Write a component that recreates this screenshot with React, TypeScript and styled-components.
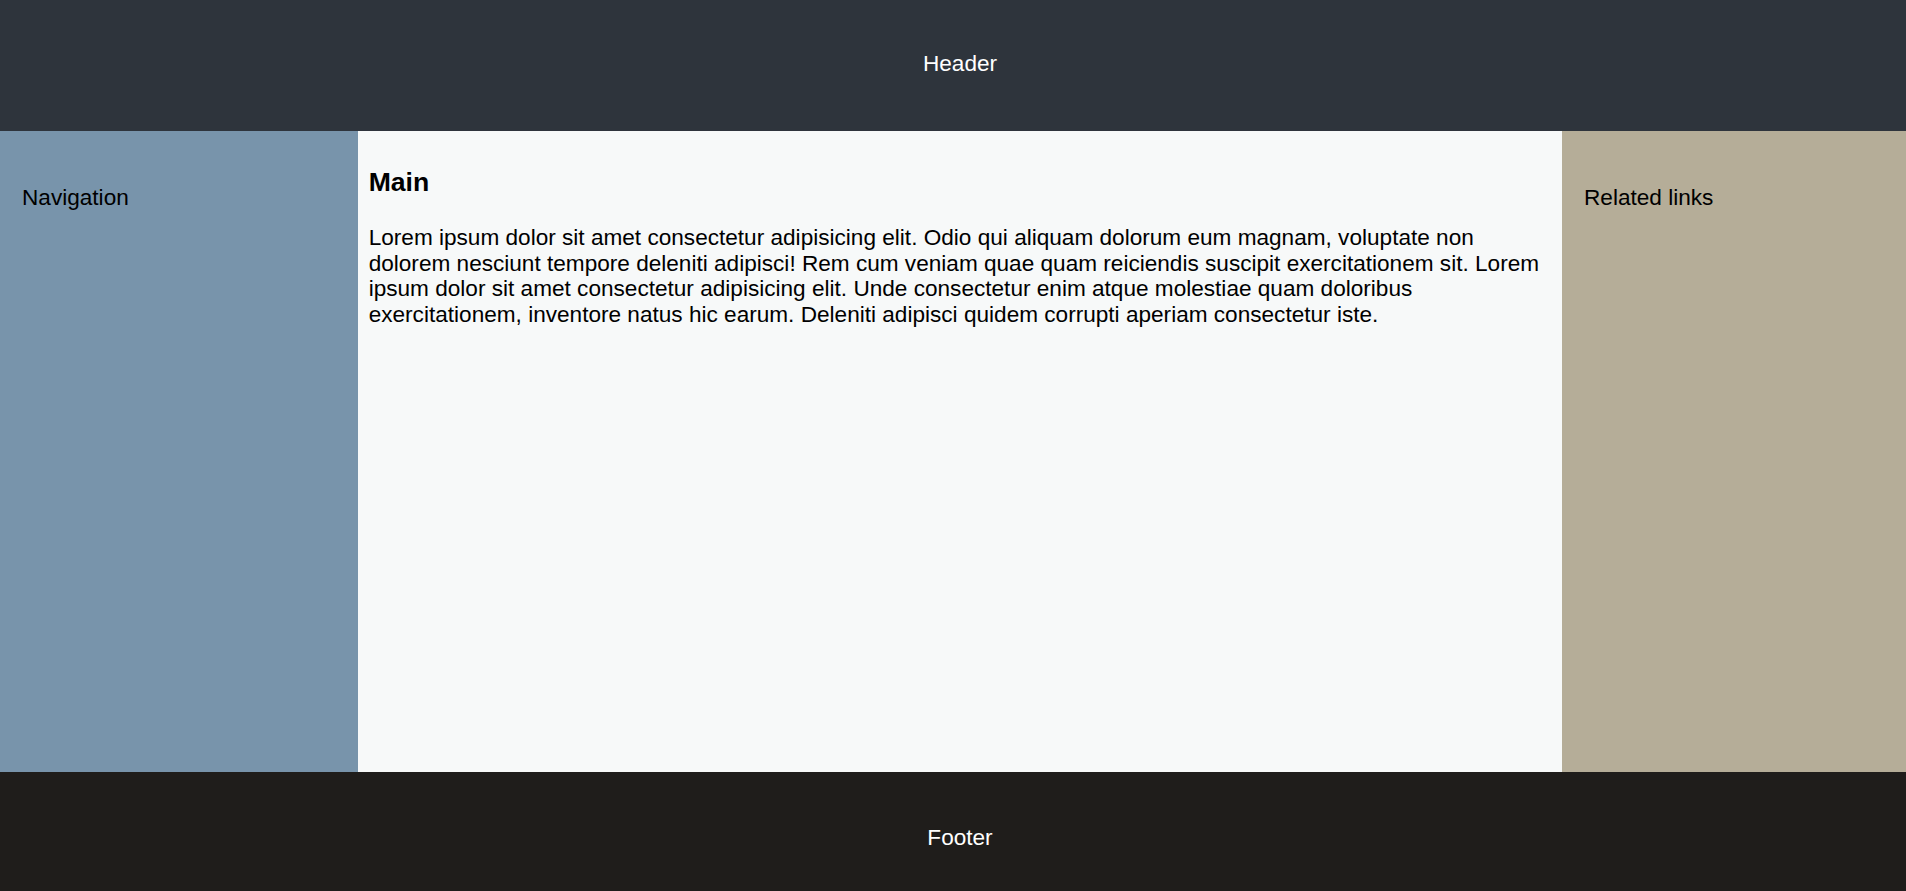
import React from "react";
import styled, { createGlobalStyle } from "styled-components";

const GlobalStyle = createGlobalStyle`
  html, body {
    margin: 0;
    padding: 0;
    height: 100%;
  }
  body {
    font-family: "Liberation Sans", Arial, sans-serif;
    font-size: 22.6px;
    color: #000;
  }
  #root {
    height: 100%;
  }
`;

const Layout = styled.div`
  display: grid;
  grid-template-columns: 358px 1fr 344px;
  grid-template-rows: 131px 1fr 119px;
  grid-template-areas:
    "header header header"
    "nav main aside"
    "footer footer footer";
  height: 891px;
  width: 100%;
`;

const Bar = styled.div<{ $bg: string; $top: number; $bottom: number }>`
  background: ${(p) => p.$bg};
  color: #fff;
  display: flex;
  align-items: center;
  justify-content: center;
  padding: ${(p) => p.$top}px 0 ${(p) => p.$bottom}px 14px;
  font-size: 22.6px;
  line-height: 26px;
`;

const Header = styled(Bar).attrs({ as: "header" })`
  grid-area: header;
`;

const Footer = styled(Bar).attrs({ as: "footer" })`
  grid-area: footer;
`;

const SidePanel = styled.aside<{ $area: string; $bg: string }>`
  grid-area: ${(p) => p.$area};
  background: ${(p) => p.$bg};
  padding: 21.33px 22px;
`;

const PanelText = styled.p`
  margin: 33px 0 0;
  font-size: 22.6px;
  line-height: 26px;
`;

const Main = styled.main`
  grid-area: main;
  background: #f7f9f9;
  padding: 10.67px;
`;

const Title = styled.h2`
  margin: 25px 0 0;
  font-size: 26.6px;
  font-weight: bold;
  line-height: 30px;
`;

const Body = styled.p`
  margin: 28px 0 0;
  font-size: 22.6px;
  line-height: 25.9px;
`;

export default function App() {
  return (
    <>
      <GlobalStyle />
      <Layout>
        <Header $bg="#2e343c" $top={0} $bottom={4}>
          Header
        </Header>
        <SidePanel as="nav" $area="nav" $bg="#7894ab">
          <PanelText>Navigation</PanelText>
        </SidePanel>
        <Main>
          <Title>Main</Title>
          <Body>
            Lorem ipsum dolor sit amet consectetur adipisicing elit. Odio qui
            aliquam dolorum eum magnam, voluptate non dolorem nesciunt tempore
            deleniti adipisci! Rem cum veniam quae quam reiciendis suscipit
            exercitationem sit. Lorem ipsum dolor sit amet consectetur
            adipisicing elit. Unde consectetur enim atque molestiae quam
            doloribus exercitationem, inventore natus hic earum. Deleniti
            adipisci quidem corrupti aperiam consectetur iste.
          </Body>
        </Main>
        <SidePanel $area="aside" $bg="#b5ad98">
          <PanelText>Related links</PanelText>
        </SidePanel>
        <Footer $bg="#1f1d1b" $top={13} $bottom={0}>
          Footer
        </Footer>
      </Layout>
    </>
  );
}
